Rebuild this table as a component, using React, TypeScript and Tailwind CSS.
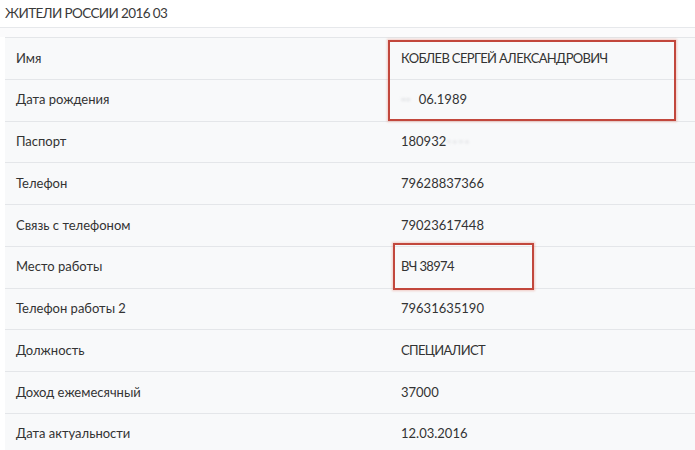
import React from "react";

const caps = "tracking-[-0.65px]";

const rows: { label: string; value: React.ReactNode }[] = [
  { label: "Имя", value: <span className={caps}>КОБЛЕВ СЕРГЕЙ АЛЕКСАНДРОВИЧ</span> },
  {
    label: "Дата рождения",
    value: (
      <>
        <span className="text-[#b9bcc2] blur-[1.5px] mr-[8px]">--</span>
        06.1989
      </>
    ),
  },
  {
    label: "Паспорт",
    value: (
      <>
        180932
        <span className="text-[#c4c7cc] blur-[1.5px] tracking-[2px]">-·-·</span>
      </>
    ),
  },
  { label: "Телефон", value: "79628837366" },
  { label: "Связь с телефоном", value: "79023617448" },
  { label: "Место работы", value: <span className={caps}>ВЧ 38974</span> },
  { label: "Телефон работы 2", value: "79631635190" },
  { label: "Должность", value: <span className={caps}>СПЕЦИАЛИСТ</span> },
  { label: "Доход ежемесячный", value: "37000" },
  { label: "Дата актуальности", value: "12.03.2016" },
];

export default function App() {
  return (
    <div
      className="relative w-[695px] h-[450px] overflow-hidden bg-white text-[#333] text-[13px]"
      style={{ fontFamily: "Lato, 'Noto Sans', sans-serif" }}
    >
      {/* Title bar */}
      <div className="h-[28px] flex items-start pl-[5px] pt-[3px] border-b border-[#e6e8eb] text-[13.5px] tracking-[-0.6px] text-[#3a3a3a]">
        ЖИТЕЛИ РОССИИ 2016 03
      </div>
      <div className="h-[9px] bg-[#fbfbfc]" />

      {/* Record table */}
      <div className="ml-[5px] bg-[#f8f9fa] border-t border-[#e4e6e9]">
        {rows.map((r) => (
          <div
            key={r.label}
            className="h-[41.75px] flex items-center border-b border-[#e4e6e9]"
          >
            <div className="w-[396px] pl-[11px]">{r.label}</div>
            <div className="flex items-center">{r.value}</div>
          </div>
        ))}
      </div>

      {/* Highlight boxes */}
      <div className="absolute left-[388px] top-[40px] w-[288px] h-[81px] border-2 border-[#c2473c] shadow-[0_0_2px_1px_rgba(230,120,100,0.35)]" />
      <div className="absolute left-[393px] top-[243px] w-[141px] h-[47px] border-2 border-[#c2473c] shadow-[0_0_2px_1px_rgba(230,120,100,0.35)]" />
    </div>
  );
}
